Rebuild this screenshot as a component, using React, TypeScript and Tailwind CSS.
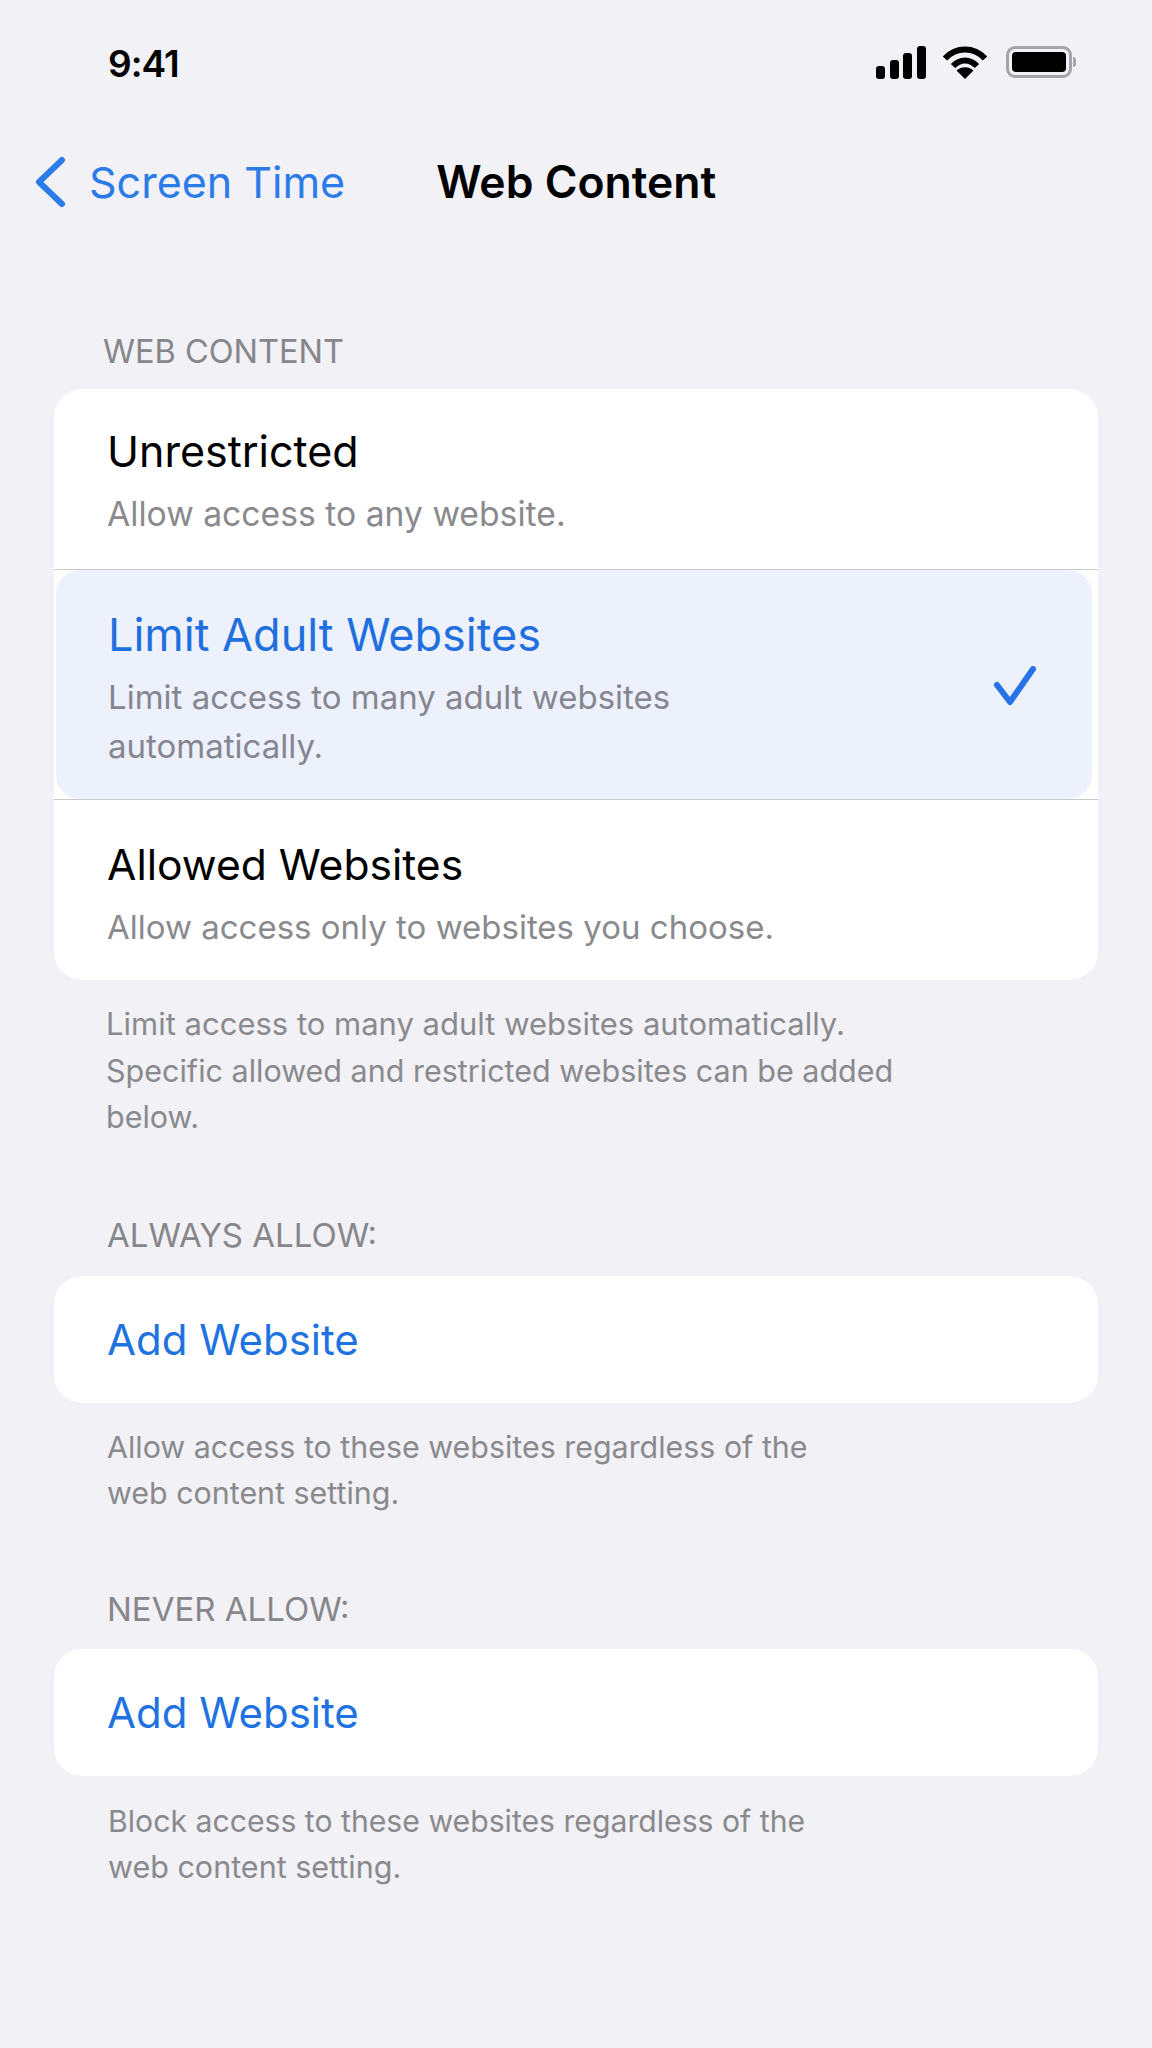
const font = { fontFamily: "Inter, 'Noto Sans', sans-serif" };

function Signal() {
  return (
    <svg width="50" height="33" viewBox="0 0 50 33" fill="#000">
      <rect x="0" y="20" width="9" height="13" rx="3" />
      <rect x="14" y="14" width="9" height="19" rx="3" />
      <rect x="27" y="7" width="9" height="26" rx="3" />
      <rect x="41" y="0" width="9" height="33" rx="3" />
    </svg>
  );
}

function Wifi() {
  return (
    <svg width="44" height="33" viewBox="0 0 44 33" fill="none" stroke="#000" strokeWidth="6">
      <path d="M2 12.500 C13 0.500 31 0.500 42 12.500" />
      <path d="M10 20 C17 12.500 27 12.500 34 20" />
      <path d="M13.500 24.500 C18 20 26 20 30.500 24.500 L22 33 Z" fill="#000" stroke="none" />
    </svg>
  );
}

function Battery() {
  return (
    <div className="flex items-center gap-[1px] ml-[2px]">
      <div className="w-[66px] h-[32px] rounded-[9px] border-[3px] border-[#a4a4a8] p-[3px]">
        <div className="w-full h-full rounded-[4px] bg-black" />
      </div>
      <div className="w-[3px] h-[10px] rounded-r-[3px] bg-[#a4a4a8]" />
    </div>
  );
}

function Caption({ children, className = "" }: { children: React.ReactNode; className?: string }) {
  return <div className={`leading-[46.500px] text-[#8a8a8e] ${className}`}>{children}</div>;
}

function SectionLabel({ children, className = "" }: { children: React.ReactNode; className?: string }) {
  return <div className={`text-[33px] leading-[36px] text-[#86868b] ${className}`}>{children}</div>;
}

function AddCard() {
  return (
    <div className="mx-[54px] h-[127px] rounded-[28px] bg-white flex items-center pl-[53px] text-[42px] text-[#1f73e0] w-[1044px]">
      Add Website
    </div>
  );
}

export default function App() {
  return (
    <div className="w-[1152px] h-[2048px] bg-[#f1f1f6] overflow-hidden" style={font}>
      <div className="h-[126px] pl-[108px] pr-[76px] flex items-center justify-between">
        <span className="mt-[2px] text-[37px] font-semibold text-black tracking-[-1px]">9:41</span>
        <div className="mb-[2px] flex items-center gap-[17px]">
          <Signal />
          <Wifi />
          <Battery />
        </div>
      </div>

      <div className="h-[112px] flex items-center pl-[34px]">
        <svg width="32" height="52" viewBox="0 0 32 52" fill="none" stroke="#2b7be8" strokeWidth="6" strokeLinecap="round" strokeLinejoin="round">
          <path d="M28 4 L5 26 L28 48" />
        </svg>
        <span className="ml-[23px] text-[43px] text-[#2b7be8]">Screen Time</span>
        <span className="ml-[91px] text-[44.500px] font-semibold text-black">Web Content</span>
      </div>

      <SectionLabel className="mt-[96px] ml-[103px] !text-[32.500px]">WEB CONTENT</SectionLabel>

      <div className="mt-[19px] mx-[54px] w-[1044px] rounded-[28px] bg-white overflow-hidden">
        <div className="h-[181px] pl-[53px] pt-[34px] border-b border-[#c9c9cd]">
          <div className="text-[43px] leading-[56px] text-black">Unrestricted</div>
          <div className="mt-[11px] text-[33.700px] leading-[48px] text-[#8a8a8e]">Allow access to any website.</div>
        </div>
        <div className="h-[230px] border-b border-[#c9c9cd]">
          <div className="h-[229px] mr-[6px] ml-[2px] rounded-[24px] bg-[#edf1fc] pl-[52px] pt-[8px] flex items-center justify-between pr-[56px]">
            <div className="w-[640px]">
              <div className="text-[45px] leading-[56px] text-[#1f6fdf]">Limit Adult Websites</div>
              <div className="mt-[10px] text-[33px] leading-[49px] text-[#85868f]">
                Limit access to many adult websites automatically.
              </div>
            </div>
            <svg width="42" height="40" viewBox="0 0 42 40" fill="none" stroke="#2672e6" strokeWidth="6" strokeLinecap="round" strokeLinejoin="round" className="-mt-[5px]">
              <path d="M3 19 L16 36 L39 3" />
            </svg>
          </div>
        </div>
        <div className="h-[180px] pl-[53px] pt-[37px]">
          <div className="text-[42.600px] leading-[56px] text-black">Allowed Websites</div>
          <div className="mt-[10px] text-[33px] leading-[48px] text-[#8a8a8e]">Allow access only to websites you choose.</div>
        </div>
      </div>

      <Caption className="mt-[21px] ml-[106px] text-[31px]">
        Limit access to many adult websites automatically.
        <br />
        <span className="text-[30.500px]">Specific allowed and restricted websites can be added</span>
        <br />
        <span className="text-[30.500px]">below.</span>
      </Caption>

      <SectionLabel className="mt-[76px] ml-[107px]">ALWAYS ALLOW:</SectionLabel>
      <div className="mt-[23px]"><AddCard /></div>
      <Caption className="mt-[21px] ml-[107px] text-[30.400px]">
        Allow access to these websites regardless of the
        <br />
        web content setting.
      </Caption>

      <SectionLabel className="mt-[74px] ml-[107px]">NEVER ALLOW:</SectionLabel>
      <div className="mt-[22px]"><AddCard /></div>
      <Caption className="mt-[22px] ml-[108px] text-[30.500px]">
        <span className="text-[30.200px]">Block access to these websites regardless of the</span>
        <br />
        web content setting.
      </Caption>
    </div>
  );
}
